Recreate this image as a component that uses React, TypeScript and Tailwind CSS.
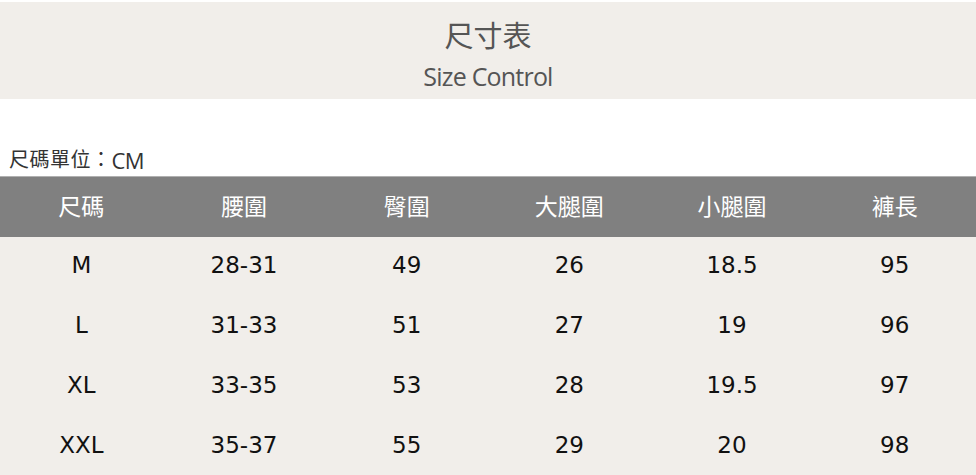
import React from "react";

const headers = ["尺碼", "腰圍", "臀圍", "大腿圍", "小腿圍", "褲長"];
const rows = [
  ["M", "28-31", "49", "26", "18.5", "95"],
  ["L", "31-33", "51", "27", "19", "96"],
  ["XL", "33-35", "53", "28", "19.5", "97"],
  ["XXL", "35-37", "55", "29", "20", "98"],
];

export default function App() {
  return (
    <div
      className="w-[976px] h-[475px] bg-white overflow-hidden"
      style={{ fontFamily: '"Open Sans", "Noto Sans CJK TC", sans-serif' }}
    >
      <div className="mt-[2px] h-[97px] bg-[#f1eeea] flex flex-col items-center text-[#555]">
        <div className="mt-[12px] text-[29px] leading-[44px]">尺寸表</div>
        <div className="mt-[1px] text-[25px] leading-[34px] tracking-[-0.8px]">Size Control</div>
      </div>
      <div className="h-[77px] flex items-end pb-[2px] pl-[9px] text-[20px] leading-[28px] text-[#333]">
        <span className="tracking-[0.5px]">尺碼單位：</span>
        <span className="text-[22px] leading-[28px] tracking-[-0.5px]">CM</span>
      </div>
      <div className="h-[61px] bg-[#808080] grid grid-cols-6 items-center text-white text-[23px] border-t border-[#b0b0b0]">
        {headers.map((h) => (
          <div key={h} className="text-center pb-[2px]">
            {h}
          </div>
        ))}
      </div>
      <div
        className="bg-[#f1eeea] h-[238px]"
        style={{ fontFamily: '"DejaVu Sans", "Noto Sans CJK TC", sans-serif' }}
      >
        {rows.map((r, i) => (
          <div key={i} className="h-[60px] grid grid-cols-6 items-center text-[#111] text-[23px] pb-[4px]">
            {r.map((c, j) => (
              <div key={j} className="text-center">
                {c}
              </div>
            ))}
          </div>
        ))}
      </div>
    </div>
  );
}
